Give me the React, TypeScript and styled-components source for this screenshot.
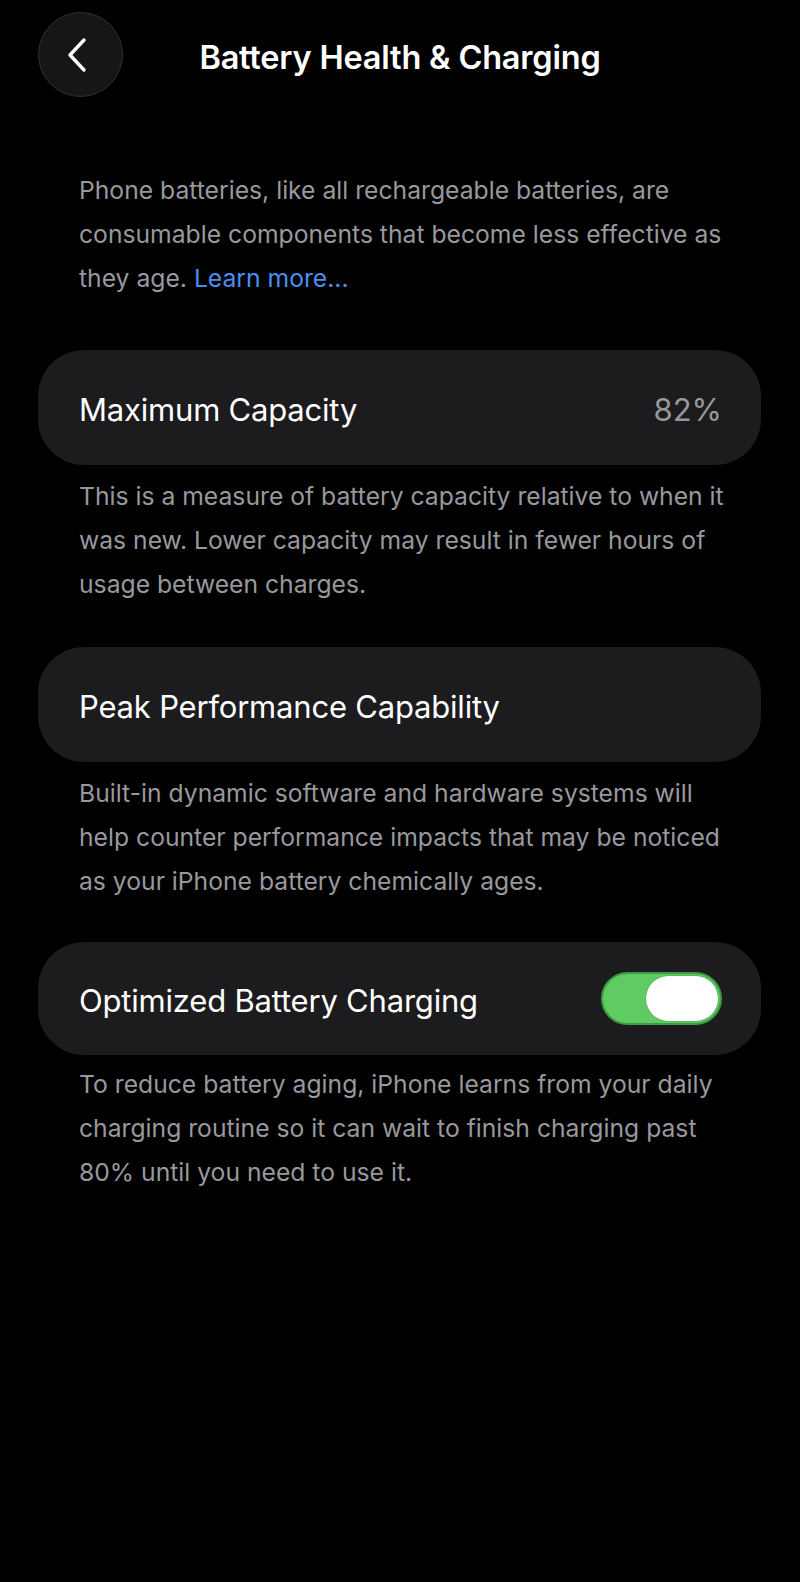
import styled, { createGlobalStyle } from "styled-components";

const GlobalStyle = createGlobalStyle`
  html, body {
    margin: 0;
    padding: 0;
    background: #000;
  }
  body {
    font-family: Inter, "Noto Sans", "Liberation Sans", sans-serif;
    -webkit-font-smoothing: antialiased;
  }
`;

export default function App() {
  return (
    <>
      <GlobalStyle />
      <Page>
        <Header>
          <BackButton aria-label="Back">
            <svg width="26" height="36" viewBox="0 0 26 36" fill="none">
              <path
                d="M19 3 L5 18 L19 33"
                stroke="#fff"
                strokeWidth="3.4"
                strokeLinecap="round"
                strokeLinejoin="round"
              />
            </svg>
          </BackButton>
          <Title>Battery Health &amp; Charging</Title>
        </Header>

        <Intro>
          Phone batteries, like all rechargeable batteries, are consumable
          components that become less effective as they age.{" "}
          <Link>Learn more...</Link>
        </Intro>

        <Card $top={50}>
          <CardLabel>Maximum Capacity</CardLabel>
          <CardValue>82%</CardValue>
        </Card>
        <Footnote>
          This is a measure of battery capacity relative to when it was new.
          Lower capacity may result in fewer hours of usage between charges.
        </Footnote>

        <Card $top={41}>
          <CardLabel>Peak Performance Capability</CardLabel>
        </Card>
        <Footnote>
          Built-in dynamic software and hardware systems will help counter
          performance impacts that may be noticed as your iPhone battery
          chemically ages.
        </Footnote>

        <Card $top={39} $height={113}>
          <CardLabel>Optimized Battery Charging</CardLabel>
          <Toggle $on>
            <Knob />
          </Toggle>
        </Card>
        <Footnote $top={7}>
          To reduce battery aging, iPhone learns from your daily charging
          routine so it can wait to finish charging past 80% until you need to
          use it.
        </Footnote>
      </Page>
    </>
  );
}

const Page = styled.div`
  min-height: 1582px;
  box-sizing: border-box;
  padding: 12px 39px 0 38px;
  background: #000;
  color: #fff;
`;

const Header = styled.div`
  position: relative;
  height: 85px;
  display: flex;
  align-items: center;
`;

const BackButton = styled.div`
  width: 85px;
  height: 85px;
  border-radius: 50%;
  box-sizing: border-box;
  background: #161617;
  border: 1.5px solid #303032;
  display: flex;
  align-items: center;
  justify-content: center;
  padding-right: 6px;
`;

const Title = styled.div`
  position: absolute;
  left: -38px;
  right: -39px;
  top: 26px;
  text-align: center;
  font-size: 32.5px;
  font-weight: 600;
  letter-spacing: -0.2px;
  color: #fff;
`;

const Intro = styled.p`
  margin: 71px 0 0;
  padding: 0 36px 0 41px;
  font-size: 24.7px;
  line-height: 44px;
  color: #98989d;
`;

const Link = styled.span`
  color: #4a8ef0;
`;

const Card = styled.div<{ $top: number; $height?: number }>`
  margin-top: ${(p) => p.$top}px;
  height: ${(p) => p.$height ?? 115}px;
  box-sizing: border-box;
  border-radius: 46px;
  background: #1c1c1e;
  display: flex;
  align-items: center;
  justify-content: space-between;
  padding: 3px 39px 0 41px;
`;

const CardLabel = styled.span`
  font-size: 31px;
  color: #fff;
  letter-spacing: -0.2px;
`;

const CardValue = styled.span`
  font-size: 31px;
  color: #98989d;
`;

const Footnote = styled.p<{ $top?: number }>`
  margin: ${(p) => p.$top ?? 9}px 0 0;
  padding: 0 36px 0 41px;
  font-size: 24.7px;
  line-height: 44px;
  color: #98989d;
`;

const Toggle = styled.div<{ $on?: boolean }>`
  width: 121px;
  height: 53px;
  margin-top: -3px;
  box-sizing: border-box;
  border-radius: 27px;
  background: ${(p) => (p.$on ? "#5fcb62" : "#39393d")};
  border: 2px solid ${(p) => (p.$on ? "#3f9a43" : "#39393d")};
  display: flex;
  align-items: center;
  justify-content: ${(p) => (p.$on ? "flex-end" : "flex-start")};
  padding: 0 2px;
`;

const Knob = styled.div`
  width: 72px;
  height: 45px;
  border-radius: 23px;
  background: #fff;
  box-shadow: 0 0 0 1px rgba(0, 0, 0, 0.08);
`;
